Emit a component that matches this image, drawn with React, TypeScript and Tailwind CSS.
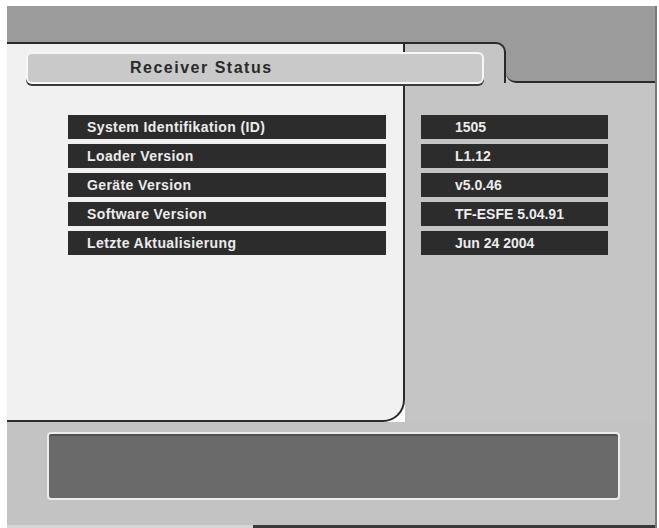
import React from "react";

const rows = [
  { label: "System Identifikation (ID)", value: "1505" },
  { label: "Loader Version", value: "L1.12" },
  { label: "Geräte Version", value: "v5.0.46" },
  { label: "Software Version", value: "TF-ESFE 5.04.91" },
  { label: "Letzte Aktualisierung", value: "Jun 24 2004" },
];

const font = { fontFamily: '"Liberation Sans", Arial, sans-serif' };

function Row({ text, className }: { text: string; className: string }) {
  return (
    <div
      className={`flex h-[24px] items-center bg-[#2c2c2c] text-[14px] font-bold leading-none tracking-[0.4px] text-[#ececec] ${className}`}
    >
      {text}
    </div>
  );
}

export default function App() {
  return (
    <div className="h-[528px] w-[659px] overflow-hidden bg-white pl-[7px] pt-[6px]" style={font}>
      <div className="relative flex w-[650px] flex-col border-r-2 border-[#7a7a7a]">
        {/* top band */}
        <div className="h-[36px] bg-[#9b9b9b]" />

        {/* middle */}
        <div className="flex h-[380px]">
          <div className="flex w-[398px] flex-col gap-[5px] rounded-br-[22px] border-b-2 border-r-2 border-t-2 border-[#2a2a2a] bg-[#f1f1f1] pl-[61px] pt-[71px]">
            {rows.map((r) => (
              <Row key={r.label} text={r.label} className="w-[318px] pl-[19px]" />
            ))}
          </div>

          <div className="flex w-[250px] flex-col bg-[#c5c5c5]">
            <div className="flex h-[41px]">
              <div className="w-[101px] bg-[#9b9b9b]">
                <div className="h-full rounded-tr-[10px] border-r-2 border-t-2 border-[#2a2a2a] bg-[#c5c5c5]" />
              </div>
              <div className="flex-1 bg-[#c5c5c5]">
                <div className="h-full rounded-bl-[10px] border-b-2 border-[#2a2a2a] bg-[#9b9b9b]" />
              </div>
            </div>
            <div className="flex flex-col gap-[5px] pl-[16px] pt-[32px]">
              {rows.map((r) => (
                <Row key={r.value} text={r.value} className="w-[187px] pl-[34px] tracking-[0px]" />
              ))}
            </div>
          </div>
        </div>

        {/* bottom area */}
        <div className="h-[103px] bg-[#c3c3c3] pl-[40px] pt-[10px]">
          <div className="h-[68px] w-[573px] rounded-[4px] border-2 border-[#ececec] bg-[#6a6a6a] shadow-[inset_0_2px_0_#505050]" />
        </div>
        <div className="flex h-[3px]">
          <div className="w-[246px] bg-[#d6d6d6]" />
          <div className="flex-1 bg-[#3a3a3a]" />
        </div>

        {/* title bar over both panels */}
        <div className="absolute left-[19px] top-[46px] flex h-[32px] w-[458px] items-center rounded-[6px] border-2 border-[#f7f7f7] bg-[#c9c9c9] pl-[102px] shadow-[0_2px_0_#3a3a3a]">
          <span className="text-[16px] font-bold leading-none tracking-[1.5px] text-[#2a2a2a]">
            Receiver Status
          </span>
        </div>
      </div>
    </div>
  );
}
